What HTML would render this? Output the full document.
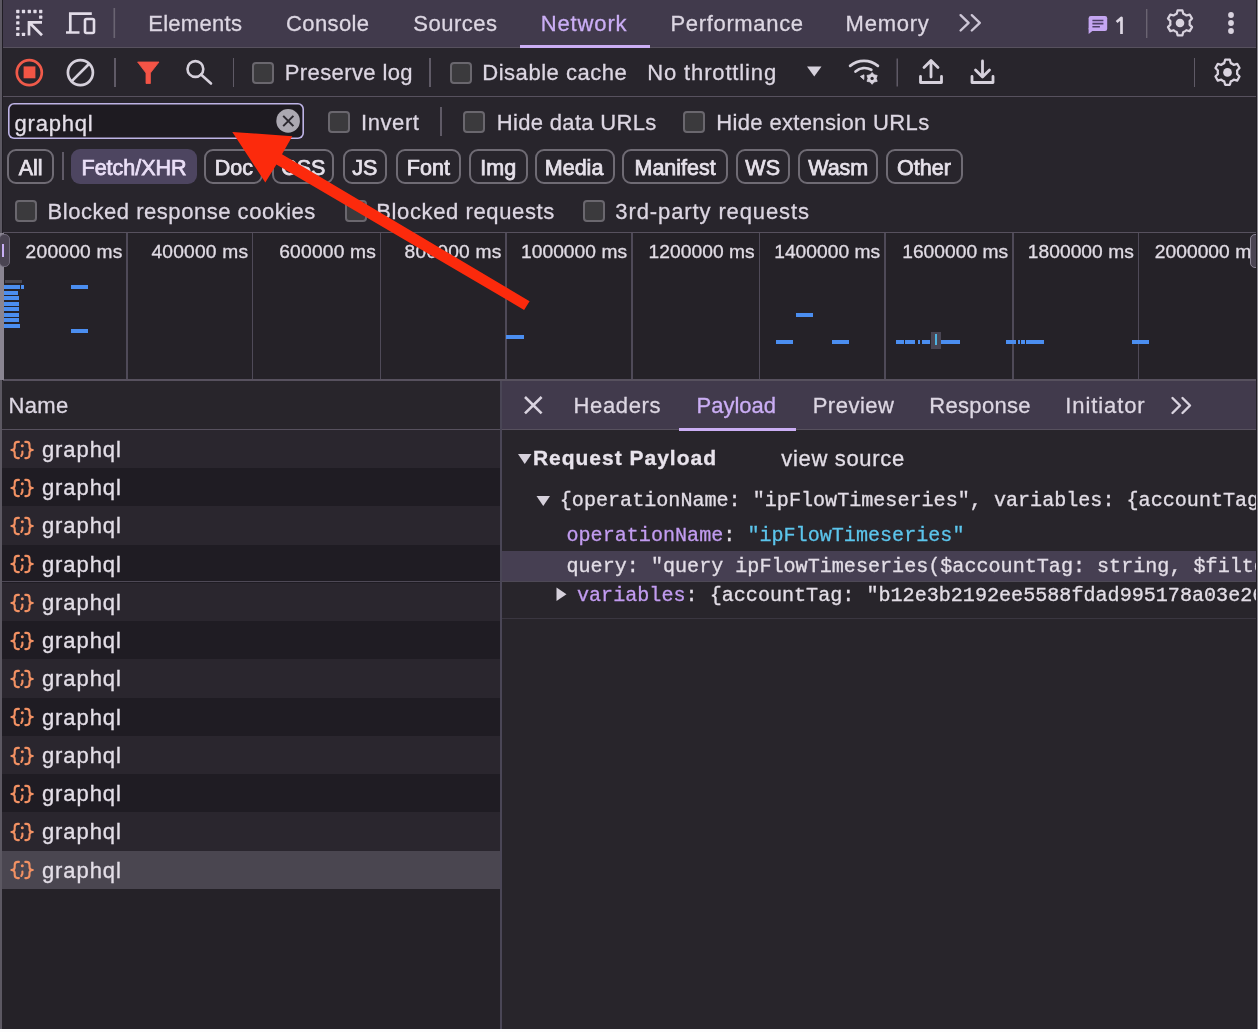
<!DOCTYPE html>
<html><head><meta charset="utf-8"><style>
html,body{margin:0;padding:0;width:1258px;height:1032px;overflow:hidden;background:#252228}
body{position:relative;font-family:"Liberation Sans",sans-serif;filter:blur(0.4px)}
.t{position:absolute;line-height:0;white-space:pre;-webkit-text-stroke:0.3px currentColor}
.r{position:absolute;box-sizing:content-box}
.cb{background:#3b3a3d;border:2px solid #6a676e;border-radius:4px}
</style></head><body>
<div class="r" style="left:0px;top:0px;width:1258px;height:47px;background:#413a4c;"></div>
<div class="r" style="left:0px;top:46.5px;width:1258px;height:1.5px;background:#57515e;"></div>
<div class="r" style="left:0px;top:48px;width:1258px;height:48px;background:#28252c;"></div>
<div class="r" style="left:0px;top:96px;width:1258px;height:1.5px;background:#57515e;"></div>
<div class="r" style="left:0px;top:97px;width:1258px;height:135px;background:#28252c;"></div>
<div class="r" style="left:0px;top:232px;width:1258px;height:1.5px;background:#57515e;"></div>
<div class="r" style="left:0px;top:233px;width:1258px;height:147px;background:#252228;"></div>
<div class="r" style="left:0px;top:379px;width:1258px;height:1.5px;background:#57515e;"></div>
<div class="r" style="left:0px;top:0px;width:2px;height:1032px;background:#5c5862;"></div>
<div class="r" style="left:2px;top:0px;width:1px;height:1032px;background:#201d24;"></div>
<svg class="r" style="left:0;top:0" width="1258" height="47" viewBox="0 0 1258 47">
<g fill="#e2dce8"><rect x="16.15" y="9.85" width="3.3" height="3.3" rx="0.6"/><rect x="21.85" y="9.85" width="3.3" height="3.3" rx="0.6"/><rect x="27.65" y="9.85" width="3.3" height="3.3" rx="0.6"/><rect x="33.35" y="9.85" width="3.3" height="3.3" rx="0.6"/><rect x="39.05" y="9.85" width="3.3" height="3.3" rx="0.6"/><rect x="39.05" y="15.55" width="3.3" height="3.3" rx="0.6"/><rect x="16.15" y="15.55" width="3.3" height="3.3" rx="0.6"/><rect x="16.15" y="21.25" width="3.3" height="3.3" rx="0.6"/><rect x="16.15" y="26.95" width="3.3" height="3.3" rx="0.6"/><rect x="16.15" y="32.75" width="3.3" height="3.3" rx="0.6"/><rect x="21.85" y="32.75" width="3.3" height="3.3" rx="0.6"/></g>
<g fill="none" stroke="#e2dce8" stroke-width="2.7">
 <path d="M29 35.6 V22.3 H42 M29 22.3 L42 35.3"/>
 <path d="M66 32.5 h13.5 M70.3 32.5 V13.6 h21.5"/>
 <rect x="85" y="19" width="9" height="14" rx="1.5" stroke-width="2.6"/>
</g>
<rect x="113.5" y="8" width="1.6" height="30" fill="#6a6472"/>
</svg>
<div class="t" style="left:148.20px;top:23.67px;font-size:22px;color:#dcd6e2;letter-spacing:0.286px;">Elements</div>
<div class="t" style="left:286.10px;top:23.67px;font-size:22px;color:#dcd6e2;letter-spacing:0.367px;">Console</div>
<div class="t" style="left:413.30px;top:23.67px;font-size:22px;color:#dcd6e2;letter-spacing:0.483px;">Sources</div>
<div class="t" style="left:540.70px;top:23.67px;font-size:22px;color:#cbaef5;letter-spacing:0.867px;">Network</div>
<div class="t" style="left:670.50px;top:23.67px;font-size:22px;color:#dcd6e2;letter-spacing:0.660px;">Performance</div>
<div class="t" style="left:845.60px;top:23.67px;font-size:22px;color:#dcd6e2;letter-spacing:0.760px;">Memory</div>
<div class="r" style="left:520px;top:45px;width:130px;height:3px;background:#cbaef5;"></div>
<svg class="r" style="left:950px;top:0" width="308" height="47" viewBox="950 0 308 47">
<g fill="none" stroke="#d9d3df" stroke-width="2.4" stroke-linecap="round" stroke-linejoin="round">
<path d="M960.6 15.2 l8 7.6 l-8 7.7 M971.8 15.2 l8 7.6 l-8 7.7" stroke="#cdc6d6"/>
</g>
<rect x="1088.6" y="16" width="18.6" height="15" rx="2.2" fill="#c5a6f2"/><path d="M1088.6 28 v6 l5 -4 z" fill="#c5a6f2"/>
<path d="M1092.4 20.5 h11 M1092.4 23.6 h11 M1092.4 26.7 h7.5" stroke="#4d3f66" stroke-width="1.6"/>
<path d="M1116.6 22 L1121.5 17.9 V34" fill="none" stroke="#dcd6e2" stroke-width="2.7" stroke-linejoin="round"/>
<rect x="1146" y="9" width="1.4" height="29" fill="#6a6472"/>
<g transform="translate(1180,23) scale(0.94)"><path d="M-2.5 -13.5 h5 l1 3.6 a10 10 0 0 1 3.2 1.9 l3.6 -1 l2.5 4.3 l-2.6 2.7 a10 10 0 0 1 0 3.7 l2.6 2.7 l-2.5 4.3 l-3.6 -1 a10 10 0 0 1 -3.2 1.9 l-1 3.6 h-5 l-1 -3.6 a10 10 0 0 1 -3.2 -1.9 l-3.6 1 l-2.5 -4.3 l2.6 -2.7 a10 10 0 0 1 0 -3.7 l-2.6 -2.7 l2.5 -4.3 l3.6 1 a10 10 0 0 1 3.2 -1.9 z" fill="none" stroke="#d9d3df" stroke-width="2.4" stroke-linejoin="round"/><circle r="4.6" fill="#d9d3df"/></g>
<circle cx="1231" cy="15" r="2.9" fill="#d9d3df"/><circle cx="1231" cy="23" r="2.9" fill="#d9d3df"/><circle cx="1231" cy="31" r="2.9" fill="#d9d3df"/>
</svg>
<svg class="r" style="left:0;top:48px" width="250" height="48" viewBox="0 48 250 48">
<circle cx="29.3" cy="72.6" r="12.5" fill="none" stroke="#f05a4a" stroke-width="2.7"/>
<rect x="23.6" y="66.4" width="11.8" height="11.9" fill="#f25545"/>
<circle cx="80.4" cy="72.6" r="12.5" fill="none" stroke="#d6d1dc" stroke-width="2.7"/>
<path d="M71.6 81.4 L89.2 63.8" stroke="#d6d1dc" stroke-width="2.7"/>
<path d="M137.6 62 h21.4 l-8.6 11 v10.5 h-4.4 v-10.5 z" fill="#f45446" stroke="#f45446" stroke-width="0.8" stroke-linejoin="round"/>
<circle cx="195.4" cy="69" r="7.9" fill="none" stroke="#d6d1dc" stroke-width="2.6"/>
<path d="M201 74.5 l10 9" stroke="#d6d1dc" stroke-width="2.6" stroke-linecap="round"/>
</svg>
<div class="r" style="left:114px;top:58px;width:1.5px;height:29px;background:#5f5a66;"></div>
<div class="r" style="left:232.5px;top:58px;width:1.5px;height:29px;background:#5f5a66;"></div>
<div class="r cb" style="left:252px;top:62px;width:18px;height:18px"></div>
<div class="t" style="left:284.80px;top:73.37px;font-size:22px;color:#dcd6e2;letter-spacing:0.382px;">Preserve log</div>
<div class="r" style="left:429px;top:58px;width:1.5px;height:29px;background:#5f5a66;"></div>
<div class="r cb" style="left:450px;top:62px;width:18px;height:18px"></div>
<div class="t" style="left:482.30px;top:73.37px;font-size:22px;color:#dcd6e2;letter-spacing:0.517px;">Disable cache</div>
<div class="t" style="left:647.30px;top:73.37px;font-size:22px;color:#dcd6e2;letter-spacing:0.850px;">No throttling</div>
<svg class="r" style="left:780px;top:48px" width="400" height="48" viewBox="780 48 400 48">
<path d="M807 66.5 h14.5 l-7.25 10 z" fill="#d6d1dc"/>
<g fill="none" stroke="#d6d1dc" stroke-width="2.7" stroke-linecap="round">
<path d="M850.1 65.9 A21.5 21.5 0 0 1 877.9 65.9"/>
<path d="M855.5 71.5 A14 14 0 0 1 871.3 69.8"/>
</g>
<path d="M860.3 76.4 L864 74.8 L863.8 79.5 z" fill="#d6d1dc" stroke="#d6d1dc" stroke-width="0.8" stroke-linejoin="round"/>
<polygon points="872.10,72.50 874.15,74.85 877.21,75.45 876.20,78.40 877.21,81.35 874.15,81.95 872.10,84.30 870.05,81.95 866.99,81.35 868.00,78.40 866.99,75.45 870.05,74.85" fill="#d6d1dc" stroke="#d6d1dc" stroke-width="0.8" stroke-linejoin="round"/><circle cx="872.1" cy="78.4" r="1.6" fill="#28252c"/>
<rect x="896.5" y="58.5" width="1.5" height="28" fill="#5f5a66"/>
<g fill="none" stroke="#d6d1dc" stroke-width="2.8" stroke-linejoin="round" stroke-linecap="round">
<path d="M920.5 76.5 v6 h21 v-6"/>
<path d="M931 77 v-16 M924 67.5 l7 -7 l7 7"/>
<path d="M972 76.5 v6 h21 v-6"/>
<path d="M982.5 61 v15.5 M975.5 70 l7 7 l7 -7"/>
</g>
</svg>
<div class="r" style="left:1193.5px;top:57.5px;width:1.5px;height:29px;background:#5f5a66;"></div>
<svg class="r" style="left:1200px;top:48px" width="58" height="48" viewBox="1200 48 58 48">
<g transform="translate(1227.5,72.4) scale(0.94)"><path d="M-2.5 -13.5 h5 l1 3.6 a10 10 0 0 1 3.2 1.9 l3.6 -1 l2.5 4.3 l-2.6 2.7 a10 10 0 0 1 0 3.7 l2.6 2.7 l-2.5 4.3 l-3.6 -1 a10 10 0 0 1 -3.2 1.9 l-1 3.6 h-5 l-1 -3.6 a10 10 0 0 1 -3.2 -1.9 l-3.6 1 l-2.5 -4.3 l2.6 -2.7 a10 10 0 0 1 0 -3.7 l-2.6 -2.7 l2.5 -4.3 l3.6 1 a10 10 0 0 1 3.2 -1.9 z" fill="none" stroke="#d9d3df" stroke-width="2.4" stroke-linejoin="round"/><circle r="4.6" fill="#d9d3df"/></g>
</svg>
<div class="r" style="left:7.6px;top:103.3px;width:296.8px;height:35.6px;box-sizing:border-box;box-shadow:inset 0 0 0 1.6px #beb4e6;border-radius:6px;background:#1e1b21"></div>
<div class="t" style="left:14.50px;top:124.17px;font-size:22px;color:#e4dfe8;letter-spacing:0.783px;">graphql</div>
<svg class="r" style="left:270px;top:104px" width="36" height="36" viewBox="270 104 36 36">
<circle cx="288.1" cy="120.9" r="11.8" fill="#aba8b1"/>
<path d="M283.2 115.9 l10.2 10.2 M293.4 115.9 l-10.2 10.2" stroke="#2a272e" stroke-width="2"/>
</svg>
<div class="r cb" style="left:328px;top:110.5px;width:18px;height:18px"></div>
<div class="t" style="left:361.00px;top:123.07px;font-size:22px;color:#dcd6e2;letter-spacing:0.580px;">Invert</div>
<div class="r" style="left:440px;top:107px;width:1.5px;height:28.5px;background:#5f5a66;"></div>
<div class="r cb" style="left:463px;top:110.5px;width:18px;height:18px"></div>
<div class="t" style="left:496.80px;top:123.07px;font-size:22px;color:#dcd6e2;letter-spacing:0.323px;">Hide data URLs</div>
<div class="r cb" style="left:683px;top:110.5px;width:18px;height:18px"></div>
<div class="t" style="left:716.30px;top:123.07px;font-size:22px;color:#dcd6e2;letter-spacing:0.344px;">Hide extension URLs</div>
<div class="r" style="left:7px;top:149px;width:43.3px;height:31px;border:2px solid #6f6b74;border-radius:9px"></div>
<div class="t" style="left:18.65px;top:167.55px;font-size:21.5px;color:#e6e1ea;-webkit-text-stroke:0.75px #e6e1ea;">All</div>
<div class="r" style="left:71px;top:149px;width:126.0px;height:35px;border-radius:9px;background:#4d4560"></div>
<div class="t" style="left:81.50px;top:167.55px;font-size:21.5px;color:#eadff7;-webkit-text-stroke:0.75px #eadff7;">Fetch/XHR</div>
<div class="r" style="left:204.4px;top:149px;width:54.9px;height:31px;border:2px solid #6f6b74;border-radius:9px"></div>
<div class="t" style="left:214.85px;top:167.55px;font-size:21.5px;color:#e6e1ea;-webkit-text-stroke:0.75px #e6e1ea;">Doc</div>
<div class="r" style="left:271.9px;top:149px;width:58.6px;height:31px;border:2px solid #6f6b74;border-radius:9px"></div>
<div class="t" style="left:281.20px;top:167.55px;font-size:21.5px;color:#e6e1ea;-webkit-text-stroke:0.75px #e6e1ea;">CSS</div>
<div class="r" style="left:342.5px;top:149px;width:40.5px;height:31px;border:2px solid #6f6b74;border-radius:9px"></div>
<div class="t" style="left:352.25px;top:167.55px;font-size:21.5px;color:#e6e1ea;-webkit-text-stroke:0.75px #e6e1ea;">JS</div>
<div class="r" style="left:395.7px;top:149px;width:61.3px;height:31px;border:2px solid #6f6b74;border-radius:9px"></div>
<div class="t" style="left:406.85px;top:167.55px;font-size:21.5px;color:#e6e1ea;-webkit-text-stroke:0.75px #e6e1ea;">Font</div>
<div class="r" style="left:468.7px;top:149px;width:55.1px;height:31px;border:2px solid #6f6b74;border-radius:9px"></div>
<div class="t" style="left:480.25px;top:167.55px;font-size:21.5px;color:#e6e1ea;-webkit-text-stroke:0.75px #e6e1ea;">Img</div>
<div class="r" style="left:535px;top:149px;width:75.6px;height:31px;border:2px solid #6f6b74;border-radius:9px"></div>
<div class="t" style="left:544.80px;top:167.55px;font-size:21.5px;color:#e6e1ea;-webkit-text-stroke:0.75px #e6e1ea;">Media</div>
<div class="r" style="left:622px;top:149px;width:102.0px;height:31px;border:2px solid #6f6b74;border-radius:9px"></div>
<div class="t" style="left:634.50px;top:167.55px;font-size:21.5px;color:#e6e1ea;-webkit-text-stroke:0.75px #e6e1ea;">Manifest</div>
<div class="r" style="left:735.7px;top:149px;width:50.3px;height:31px;border:2px solid #6f6b74;border-radius:9px"></div>
<div class="t" style="left:745.35px;top:167.55px;font-size:21.5px;color:#e6e1ea;-webkit-text-stroke:0.75px #e6e1ea;">WS</div>
<div class="r" style="left:798px;top:149px;width:76.3px;height:31px;border:2px solid #6f6b74;border-radius:9px"></div>
<div class="t" style="left:808.15px;top:167.55px;font-size:21.5px;color:#e6e1ea;-webkit-text-stroke:0.75px #e6e1ea;">Wasm</div>
<div class="r" style="left:885.5px;top:149px;width:73.2px;height:31px;border:2px solid #6f6b74;border-radius:9px"></div>
<div class="t" style="left:897.10px;top:167.55px;font-size:21.5px;color:#e6e1ea;-webkit-text-stroke:0.75px #e6e1ea;">Other</div>
<div class="r" style="left:62px;top:152px;width:1.5px;height:28px;background:#5f5a66;"></div>
<div class="r cb" style="left:14.5px;top:200px;width:18px;height:18px"></div>
<div class="t" style="left:47.60px;top:211.87px;font-size:22px;color:#dcd6e2;letter-spacing:0.530px;">Blocked response cookies</div>
<div class="r cb" style="left:344.5px;top:200px;width:18px;height:18px"></div>
<div class="t" style="left:376.30px;top:211.87px;font-size:22px;color:#dcd6e2;letter-spacing:0.613px;">Blocked requests</div>
<div class="r cb" style="left:583px;top:200px;width:18px;height:18px"></div>
<div class="t" style="left:615.30px;top:211.87px;font-size:22px;color:#dcd6e2;letter-spacing:0.894px;">3rd-party requests</div>
<div class="r" style="left:126.15px;top:233px;width:1.5px;height:146px;background:#4f4a58;"></div>
<div class="r" style="left:251.95px;top:233px;width:1.5px;height:146px;background:#4f4a58;"></div>
<div class="r" style="left:379.75px;top:233px;width:1.5px;height:146px;background:#4f4a58;"></div>
<div class="r" style="left:505.15px;top:233px;width:1.5px;height:146px;background:#4f4a58;"></div>
<div class="r" style="left:631.15px;top:233px;width:1.5px;height:146px;background:#4f4a58;"></div>
<div class="r" style="left:758.75px;top:233px;width:1.5px;height:146px;background:#4f4a58;"></div>
<div class="r" style="left:884.35px;top:233px;width:1.5px;height:146px;background:#4f4a58;"></div>
<div class="r" style="left:1012.35px;top:233px;width:1.5px;height:146px;background:#4f4a58;"></div>
<div class="r" style="left:1137.95px;top:233px;width:1.5px;height:146px;background:#4f4a58;"></div>
<div class="t" style="left:25.60px;top:251.74px;font-size:19.2px;color:#e0dbe4;letter-spacing:0.225px;">200000 ms</div>
<div class="t" style="left:151.40px;top:251.74px;font-size:19.2px;color:#e0dbe4;letter-spacing:0.225px;">400000 ms</div>
<div class="t" style="left:279.20px;top:251.74px;font-size:19.2px;color:#e0dbe4;letter-spacing:0.225px;">600000 ms</div>
<div class="t" style="left:404.60px;top:251.74px;font-size:19.2px;color:#e0dbe4;letter-spacing:0.225px;">800000 ms</div>
<div class="t" style="left:521.00px;top:251.74px;font-size:19.2px;color:#e0dbe4;letter-spacing:0.044px;">1000000 ms</div>
<div class="t" style="left:648.60px;top:251.74px;font-size:19.2px;color:#e0dbe4;letter-spacing:0.044px;">1200000 ms</div>
<div class="t" style="left:774.20px;top:251.74px;font-size:19.2px;color:#e0dbe4;letter-spacing:0.044px;">1400000 ms</div>
<div class="t" style="left:902.20px;top:251.74px;font-size:19.2px;color:#e0dbe4;letter-spacing:0.044px;">1600000 ms</div>
<div class="t" style="left:1027.80px;top:251.74px;font-size:19.2px;color:#e0dbe4;letter-spacing:0.044px;">1800000 ms</div>
<div class="t" style="left:1154.80px;top:251.74px;font-size:19.2px;color:#e0dbe4;letter-spacing:0.044px;">2000000 ms</div>
<div class="r" style="left:0px;top:233px;width:4px;height:147px;background:#8a8592;"></div>
<div class="r" style="left:-1px;top:233.5px;width:11px;height:33.5px;background:#4a4452;border:1px solid #6e6878;border-radius:5px;box-sizing:border-box"></div>
<div class="r" style="left:1.7px;top:244.4px;width:2.3px;height:12.2px;background:#c9b0f5;"></div>
<div class="r" style="left:1250px;top:233.5px;width:12px;height:34px;background:#4a4452;border:1px solid #8a8494;border-radius:5px;box-sizing:border-box"></div>
<div class="r" style="left:4.8px;top:280.3px;width:17px;height:2.8px;background:#4a4750;"></div>
<div class="r" style="left:4px;top:285px;width:15.7px;height:4px;background:#4b8ef0;"></div>
<div class="r" style="left:21px;top:285px;width:3px;height:4px;background:#4b8ef0;"></div>
<div class="r" style="left:4px;top:290.8px;width:14px;height:4px;background:#4b8ef0;"></div>
<div class="r" style="left:4px;top:296.3px;width:15px;height:4px;background:#4b8ef0;"></div>
<div class="r" style="left:4px;top:301.8px;width:15px;height:4px;background:#4b8ef0;"></div>
<div class="r" style="left:4px;top:307.3px;width:15px;height:4px;background:#4b8ef0;"></div>
<div class="r" style="left:4px;top:312.8px;width:15px;height:4px;background:#4b8ef0;"></div>
<div class="r" style="left:4px;top:318.3px;width:15px;height:4px;background:#4b8ef0;"></div>
<div class="r" style="left:4px;top:323.8px;width:16px;height:4px;background:#4b8ef0;"></div>
<div class="r" style="left:71px;top:285px;width:17px;height:4px;background:#4b8ef0;"></div>
<div class="r" style="left:71px;top:329px;width:17px;height:4px;background:#4b8ef0;"></div>
<div class="r" style="left:506px;top:334.5px;width:18px;height:4px;background:#4b8ef0;"></div>
<div class="r" style="left:796px;top:312.5px;width:17px;height:4px;background:#4b8ef0;"></div>
<div class="r" style="left:776px;top:340px;width:17px;height:4px;background:#4b8ef0;"></div>
<div class="r" style="left:831.6px;top:340px;width:17px;height:4px;background:#4b8ef0;"></div>
<div class="r" style="left:895.5px;top:340px;width:8px;height:4px;background:#4b8ef0;"></div>
<div class="r" style="left:905px;top:340px;width:10px;height:4px;background:#4b8ef0;"></div>
<div class="r" style="left:918px;top:340px;width:2px;height:4px;background:#4b8ef0;"></div>
<div class="r" style="left:922px;top:340px;width:8px;height:4px;background:#4b8ef0;"></div>
<div class="r" style="left:941px;top:340px;width:19px;height:4px;background:#4b8ef0;"></div>
<div class="r" style="left:1006.3px;top:340px;width:10px;height:4px;background:#4b8ef0;"></div>
<div class="r" style="left:1018px;top:340px;width:2px;height:4px;background:#4b8ef0;"></div>
<div class="r" style="left:1021px;top:340px;width:4px;height:4px;background:#4b8ef0;"></div>
<div class="r" style="left:1026px;top:340px;width:18px;height:4px;background:#4b8ef0;"></div>
<div class="r" style="left:1132px;top:340px;width:17px;height:4px;background:#4b8ef0;"></div>
<div class="r" style="left:930.6px;top:331.5px;width:10px;height:17.5px;background:#4a4654;"></div>
<div class="r" style="left:934.5px;top:334px;width:2.5px;height:11px;background:#4fb2e0;"></div>
<div class="r" style="left:2px;top:380.5px;width:498px;height:651px;background:#252228;"></div>
<div class="r" style="left:2px;top:380.5px;width:498px;height:49.5px;background:#28252b;"></div>
<div class="t" style="left:8.50px;top:405.57px;font-size:22px;color:#dcd6e2;letter-spacing:0.333px;">Name</div>
<div class="r" style="left:2px;top:429.8px;width:498px;height:38.26px;background:#2a262e;"></div>
<div class="t" style="left:41.90px;top:449.87px;font-size:22px;color:#e3dee7;letter-spacing:0.933px;">graphql</div>
<svg class="r" style="left:0;top:434.50px" width="40" height="30" viewBox="0 -15 40 30">
<g fill="none" stroke="#f29163" stroke-width="2.1" stroke-linecap="round" stroke-linejoin="round">
<path d="M18.9 -8.1 h-1.2 q-3 0 -3 3 v2.3 q0 2.8 -3.3 2.8 q3.3 0 3.3 2.8 v2.3 q0 3 3 3 h1.2"/>
<path d="M25.3 -8.1 h1.2 q3 0 3 3 v2.3 q0 2.8 3.3 2.8 q-3.3 0 -3.3 2.8 v2.3 q0 3 -3 3 h-1.2"/>
<path d="M22.4 1.5 v2.2 l-1.1 2.3"/>
</g><circle cx="22.3" cy="-4.3" r="1.5" fill="#f29163"/>
</svg>
<div class="r" style="left:2px;top:468.06px;width:498px;height:38.26px;background:#1f1c23;"></div>
<div class="t" style="left:41.90px;top:488.13px;font-size:22px;color:#e3dee7;letter-spacing:0.933px;">graphql</div>
<svg class="r" style="left:0;top:472.76px" width="40" height="30" viewBox="0 -15 40 30">
<g fill="none" stroke="#f29163" stroke-width="2.1" stroke-linecap="round" stroke-linejoin="round">
<path d="M18.9 -8.1 h-1.2 q-3 0 -3 3 v2.3 q0 2.8 -3.3 2.8 q3.3 0 3.3 2.8 v2.3 q0 3 3 3 h1.2"/>
<path d="M25.3 -8.1 h1.2 q3 0 3 3 v2.3 q0 2.8 3.3 2.8 q-3.3 0 -3.3 2.8 v2.3 q0 3 -3 3 h-1.2"/>
<path d="M22.4 1.5 v2.2 l-1.1 2.3"/>
</g><circle cx="22.3" cy="-4.3" r="1.5" fill="#f29163"/>
</svg>
<div class="r" style="left:2px;top:506.32px;width:498px;height:38.26px;background:#2a262e;"></div>
<div class="t" style="left:41.90px;top:526.39px;font-size:22px;color:#e3dee7;letter-spacing:0.933px;">graphql</div>
<svg class="r" style="left:0;top:511.02px" width="40" height="30" viewBox="0 -15 40 30">
<g fill="none" stroke="#f29163" stroke-width="2.1" stroke-linecap="round" stroke-linejoin="round">
<path d="M18.9 -8.1 h-1.2 q-3 0 -3 3 v2.3 q0 2.8 -3.3 2.8 q3.3 0 3.3 2.8 v2.3 q0 3 3 3 h1.2"/>
<path d="M25.3 -8.1 h1.2 q3 0 3 3 v2.3 q0 2.8 3.3 2.8 q-3.3 0 -3.3 2.8 v2.3 q0 3 -3 3 h-1.2"/>
<path d="M22.4 1.5 v2.2 l-1.1 2.3"/>
</g><circle cx="22.3" cy="-4.3" r="1.5" fill="#f29163"/>
</svg>
<div class="r" style="left:2px;top:544.58px;width:498px;height:38.26px;background:#1f1c23;"></div>
<div class="t" style="left:41.90px;top:564.65px;font-size:22px;color:#e3dee7;letter-spacing:0.933px;">graphql</div>
<svg class="r" style="left:0;top:549.28px" width="40" height="30" viewBox="0 -15 40 30">
<g fill="none" stroke="#f29163" stroke-width="2.1" stroke-linecap="round" stroke-linejoin="round">
<path d="M18.9 -8.1 h-1.2 q-3 0 -3 3 v2.3 q0 2.8 -3.3 2.8 q3.3 0 3.3 2.8 v2.3 q0 3 3 3 h1.2"/>
<path d="M25.3 -8.1 h1.2 q3 0 3 3 v2.3 q0 2.8 3.3 2.8 q-3.3 0 -3.3 2.8 v2.3 q0 3 -3 3 h-1.2"/>
<path d="M22.4 1.5 v2.2 l-1.1 2.3"/>
</g><circle cx="22.3" cy="-4.3" r="1.5" fill="#f29163"/>
</svg>
<div class="r" style="left:2px;top:582.84px;width:498px;height:38.26px;background:#2a262e;"></div>
<div class="t" style="left:41.90px;top:602.91px;font-size:22px;color:#e3dee7;letter-spacing:0.933px;">graphql</div>
<svg class="r" style="left:0;top:587.54px" width="40" height="30" viewBox="0 -15 40 30">
<g fill="none" stroke="#f29163" stroke-width="2.1" stroke-linecap="round" stroke-linejoin="round">
<path d="M18.9 -8.1 h-1.2 q-3 0 -3 3 v2.3 q0 2.8 -3.3 2.8 q3.3 0 3.3 2.8 v2.3 q0 3 3 3 h1.2"/>
<path d="M25.3 -8.1 h1.2 q3 0 3 3 v2.3 q0 2.8 3.3 2.8 q-3.3 0 -3.3 2.8 v2.3 q0 3 -3 3 h-1.2"/>
<path d="M22.4 1.5 v2.2 l-1.1 2.3"/>
</g><circle cx="22.3" cy="-4.3" r="1.5" fill="#f29163"/>
</svg>
<div class="r" style="left:2px;top:621.1px;width:498px;height:38.26px;background:#1f1c23;"></div>
<div class="t" style="left:41.90px;top:641.17px;font-size:22px;color:#e3dee7;letter-spacing:0.933px;">graphql</div>
<svg class="r" style="left:0;top:625.80px" width="40" height="30" viewBox="0 -15 40 30">
<g fill="none" stroke="#f29163" stroke-width="2.1" stroke-linecap="round" stroke-linejoin="round">
<path d="M18.9 -8.1 h-1.2 q-3 0 -3 3 v2.3 q0 2.8 -3.3 2.8 q3.3 0 3.3 2.8 v2.3 q0 3 3 3 h1.2"/>
<path d="M25.3 -8.1 h1.2 q3 0 3 3 v2.3 q0 2.8 3.3 2.8 q-3.3 0 -3.3 2.8 v2.3 q0 3 -3 3 h-1.2"/>
<path d="M22.4 1.5 v2.2 l-1.1 2.3"/>
</g><circle cx="22.3" cy="-4.3" r="1.5" fill="#f29163"/>
</svg>
<div class="r" style="left:2px;top:659.36px;width:498px;height:38.26px;background:#2a262e;"></div>
<div class="t" style="left:41.90px;top:679.43px;font-size:22px;color:#e3dee7;letter-spacing:0.933px;">graphql</div>
<svg class="r" style="left:0;top:664.06px" width="40" height="30" viewBox="0 -15 40 30">
<g fill="none" stroke="#f29163" stroke-width="2.1" stroke-linecap="round" stroke-linejoin="round">
<path d="M18.9 -8.1 h-1.2 q-3 0 -3 3 v2.3 q0 2.8 -3.3 2.8 q3.3 0 3.3 2.8 v2.3 q0 3 3 3 h1.2"/>
<path d="M25.3 -8.1 h1.2 q3 0 3 3 v2.3 q0 2.8 3.3 2.8 q-3.3 0 -3.3 2.8 v2.3 q0 3 -3 3 h-1.2"/>
<path d="M22.4 1.5 v2.2 l-1.1 2.3"/>
</g><circle cx="22.3" cy="-4.3" r="1.5" fill="#f29163"/>
</svg>
<div class="r" style="left:2px;top:697.62px;width:498px;height:38.26px;background:#1f1c23;"></div>
<div class="t" style="left:41.90px;top:717.69px;font-size:22px;color:#e3dee7;letter-spacing:0.933px;">graphql</div>
<svg class="r" style="left:0;top:702.32px" width="40" height="30" viewBox="0 -15 40 30">
<g fill="none" stroke="#f29163" stroke-width="2.1" stroke-linecap="round" stroke-linejoin="round">
<path d="M18.9 -8.1 h-1.2 q-3 0 -3 3 v2.3 q0 2.8 -3.3 2.8 q3.3 0 3.3 2.8 v2.3 q0 3 3 3 h1.2"/>
<path d="M25.3 -8.1 h1.2 q3 0 3 3 v2.3 q0 2.8 3.3 2.8 q-3.3 0 -3.3 2.8 v2.3 q0 3 -3 3 h-1.2"/>
<path d="M22.4 1.5 v2.2 l-1.1 2.3"/>
</g><circle cx="22.3" cy="-4.3" r="1.5" fill="#f29163"/>
</svg>
<div class="r" style="left:2px;top:735.88px;width:498px;height:38.26px;background:#2a262e;"></div>
<div class="t" style="left:41.90px;top:755.95px;font-size:22px;color:#e3dee7;letter-spacing:0.933px;">graphql</div>
<svg class="r" style="left:0;top:740.58px" width="40" height="30" viewBox="0 -15 40 30">
<g fill="none" stroke="#f29163" stroke-width="2.1" stroke-linecap="round" stroke-linejoin="round">
<path d="M18.9 -8.1 h-1.2 q-3 0 -3 3 v2.3 q0 2.8 -3.3 2.8 q3.3 0 3.3 2.8 v2.3 q0 3 3 3 h1.2"/>
<path d="M25.3 -8.1 h1.2 q3 0 3 3 v2.3 q0 2.8 3.3 2.8 q-3.3 0 -3.3 2.8 v2.3 q0 3 -3 3 h-1.2"/>
<path d="M22.4 1.5 v2.2 l-1.1 2.3"/>
</g><circle cx="22.3" cy="-4.3" r="1.5" fill="#f29163"/>
</svg>
<div class="r" style="left:2px;top:774.14px;width:498px;height:38.26px;background:#1f1c23;"></div>
<div class="t" style="left:41.90px;top:794.21px;font-size:22px;color:#e3dee7;letter-spacing:0.933px;">graphql</div>
<svg class="r" style="left:0;top:778.84px" width="40" height="30" viewBox="0 -15 40 30">
<g fill="none" stroke="#f29163" stroke-width="2.1" stroke-linecap="round" stroke-linejoin="round">
<path d="M18.9 -8.1 h-1.2 q-3 0 -3 3 v2.3 q0 2.8 -3.3 2.8 q3.3 0 3.3 2.8 v2.3 q0 3 3 3 h1.2"/>
<path d="M25.3 -8.1 h1.2 q3 0 3 3 v2.3 q0 2.8 3.3 2.8 q-3.3 0 -3.3 2.8 v2.3 q0 3 -3 3 h-1.2"/>
<path d="M22.4 1.5 v2.2 l-1.1 2.3"/>
</g><circle cx="22.3" cy="-4.3" r="1.5" fill="#f29163"/>
</svg>
<div class="r" style="left:2px;top:812.4px;width:498px;height:38.26px;background:#2a262e;"></div>
<div class="t" style="left:41.90px;top:832.47px;font-size:22px;color:#e3dee7;letter-spacing:0.933px;">graphql</div>
<svg class="r" style="left:0;top:817.10px" width="40" height="30" viewBox="0 -15 40 30">
<g fill="none" stroke="#f29163" stroke-width="2.1" stroke-linecap="round" stroke-linejoin="round">
<path d="M18.9 -8.1 h-1.2 q-3 0 -3 3 v2.3 q0 2.8 -3.3 2.8 q3.3 0 3.3 2.8 v2.3 q0 3 3 3 h1.2"/>
<path d="M25.3 -8.1 h1.2 q3 0 3 3 v2.3 q0 2.8 3.3 2.8 q-3.3 0 -3.3 2.8 v2.3 q0 3 -3 3 h-1.2"/>
<path d="M22.4 1.5 v2.2 l-1.1 2.3"/>
</g><circle cx="22.3" cy="-4.3" r="1.5" fill="#f29163"/>
</svg>
<div class="r" style="left:2px;top:850.66px;width:498px;height:38.26px;background:#4a4650;"></div>
<div class="t" style="left:41.90px;top:870.73px;font-size:22px;color:#e3dee7;letter-spacing:0.933px;">graphql</div>
<svg class="r" style="left:0;top:855.36px" width="40" height="30" viewBox="0 -15 40 30">
<g fill="none" stroke="#f29163" stroke-width="2.1" stroke-linecap="round" stroke-linejoin="round">
<path d="M18.9 -8.1 h-1.2 q-3 0 -3 3 v2.3 q0 2.8 -3.3 2.8 q3.3 0 3.3 2.8 v2.3 q0 3 3 3 h1.2"/>
<path d="M25.3 -8.1 h1.2 q3 0 3 3 v2.3 q0 2.8 3.3 2.8 q-3.3 0 -3.3 2.8 v2.3 q0 3 -3 3 h-1.2"/>
<path d="M22.4 1.5 v2.2 l-1.1 2.3"/>
</g><circle cx="22.3" cy="-4.3" r="1.5" fill="#f29163"/>
</svg>
<div class="r" style="left:2px;top:429.3px;width:498px;height:1.2px;background:#57515e;"></div>
<div class="r" style="left:2px;top:581.3px;width:498px;height:1.2px;background:#4e4956;"></div>
<div class="r" style="left:500px;top:380.5px;width:2px;height:651px;background:#4a4656;"></div>
<div class="r" style="left:502.6px;top:430px;width:1.2px;height:600px;background:#1f1d22;"></div>
<div class="r" style="left:502px;top:380.5px;width:756px;height:651px;background:#252228;"></div>
<div class="r" style="left:502px;top:380.5px;width:756px;height:48.5px;background:#413a4c;"></div>
<svg class="r" style="left:515px;top:388px" width="35" height="35" viewBox="515 388 35 35">
<path d="M525 397 l16.6 16.4 M541.6 397 l-16.6 16.4" stroke="#d9d3df" stroke-width="2.6"/>
</svg>
<div class="t" style="left:573.50px;top:405.67px;font-size:22px;color:#dcd6e2;letter-spacing:0.650px;">Headers</div>
<div class="t" style="left:696.50px;top:405.67px;font-size:22px;color:#cbaef5;">Payload</div>
<div class="t" style="left:812.70px;top:405.67px;font-size:22px;color:#dcd6e2;letter-spacing:0.500px;">Preview</div>
<div class="t" style="left:929.30px;top:405.67px;font-size:22px;color:#dcd6e2;letter-spacing:0.314px;">Response</div>
<div class="t" style="left:1065.30px;top:405.67px;font-size:22px;color:#dcd6e2;letter-spacing:0.900px;">Initiator</div>
<svg class="r" style="left:1165px;top:390px" width="35" height="30" viewBox="1165 390 35 30">
<g fill="none" stroke="#d9d3df" stroke-width="2.4" stroke-linecap="round" stroke-linejoin="round">
<path d="M1172.5 398 l7.5 7.5 l-7.5 7.5 M1182.5 398 l7.5 7.5 l-7.5 7.5"/></g></svg>
<div class="r" style="left:502px;top:430.3px;width:756px;height:600px;background:#28252b;"></div>
<div class="r" style="left:502px;top:429.2px;width:756px;height:1.2px;background:#57515e;"></div>
<div class="r" style="left:679px;top:427.6px;width:116.5px;height:3px;background:#cbaef5;"></div>
<svg class="r" style="left:510px;top:445px" width="70" height="170" viewBox="510 445 70 170">
<path d="M518 454 h13.5 l-6.75 10 z" fill="#d6d1dc"/>
<path d="M536.5 496 h13.5 l-6.75 10 z" fill="#d6d1dc"/>
<path d="M556.5 587.5 v13.5 l10 -6.75 z" fill="#d6d1dc"/>
</svg>
<div class="t" style="left:532.90px;top:458.22px;font-size:21px;color:#e8e3ec;letter-spacing:0.993px;font-weight:700;">Request Payload</div>
<div class="t" style="left:781.30px;top:458.87px;font-size:22px;color:#e3dee7;letter-spacing:0.670px;">view source</div>
<div class="r" style="left:502px;top:551px;width:756px;height:29.5px;background:#463f52;"></div>
<div class="r" style="left:502px;top:581px;width:756px;height:1.2px;background:#4e4956;"></div>
<div class="r" style="left:502px;top:617.5px;width:756px;height:1.2px;background:#3a3640;"></div>
<div class="t" style="left:559.8px;top:500.65px;font-family:'Liberation Mono',monospace;font-size:20.1px;color:#e2dde6;-webkit-text-stroke:0.3px currentColor">{operationName: "ipFlowTimeseries", variables: {accountTag: "b12e3b2192ee5588</div>
<div class="t" style="left:566.5px;top:535.65px;font-family:'Liberation Mono',monospace;font-size:20.1px;color:#e2dde6;-webkit-text-stroke:0.3px currentColor"><span style="color:#c29cf0">operationName</span>: <span style="color:#5cc5ec">"ipFlowTimeseries"</span></div>
<div class="t" style="left:566.5px;top:567.35px;font-family:'Liberation Mono',monospace;font-size:20.1px;color:#e2dde6;-webkit-text-stroke:0.3px currentColor">query: "query ipFlowTimeseries($accountTag: string, $filter: ZoneNetworkAnalyticsAdaptiveGroupsFilter_InputObject)</div>
<div class="t" style="left:577px;top:596.05px;font-family:'Liberation Mono',monospace;font-size:20.1px;color:#e2dde6;-webkit-text-stroke:0.3px currentColor"><span style="color:#c29cf0">variables</span>: {accountTag: "b12e3b2192ee5588fdad995178a03e26", filter: {}}</div>
<div class="r" style="left:1256px;top:0px;width:1px;height:1032px;background:#1e1c21;"></div>
<div class="r" style="left:1257px;top:0px;width:1px;height:1032px;background:#8e8a93;"></div>
<div class="r" style="left:0px;top:1028.8px;width:1258px;height:3.2px;background:#fcfcfd;"></div>
<svg class="r" style="left:0;top:0" width="1258" height="1032" viewBox="0 0 1258 1032">
<path d="M232.3 131.9 L292.3 136.3 L282 154.2 L529.6 301.2 L524.1 309.9 L276.4 164.5 L265.3 182.4 Z" fill="#fc2a0c"/>
</svg>
</body></html>
